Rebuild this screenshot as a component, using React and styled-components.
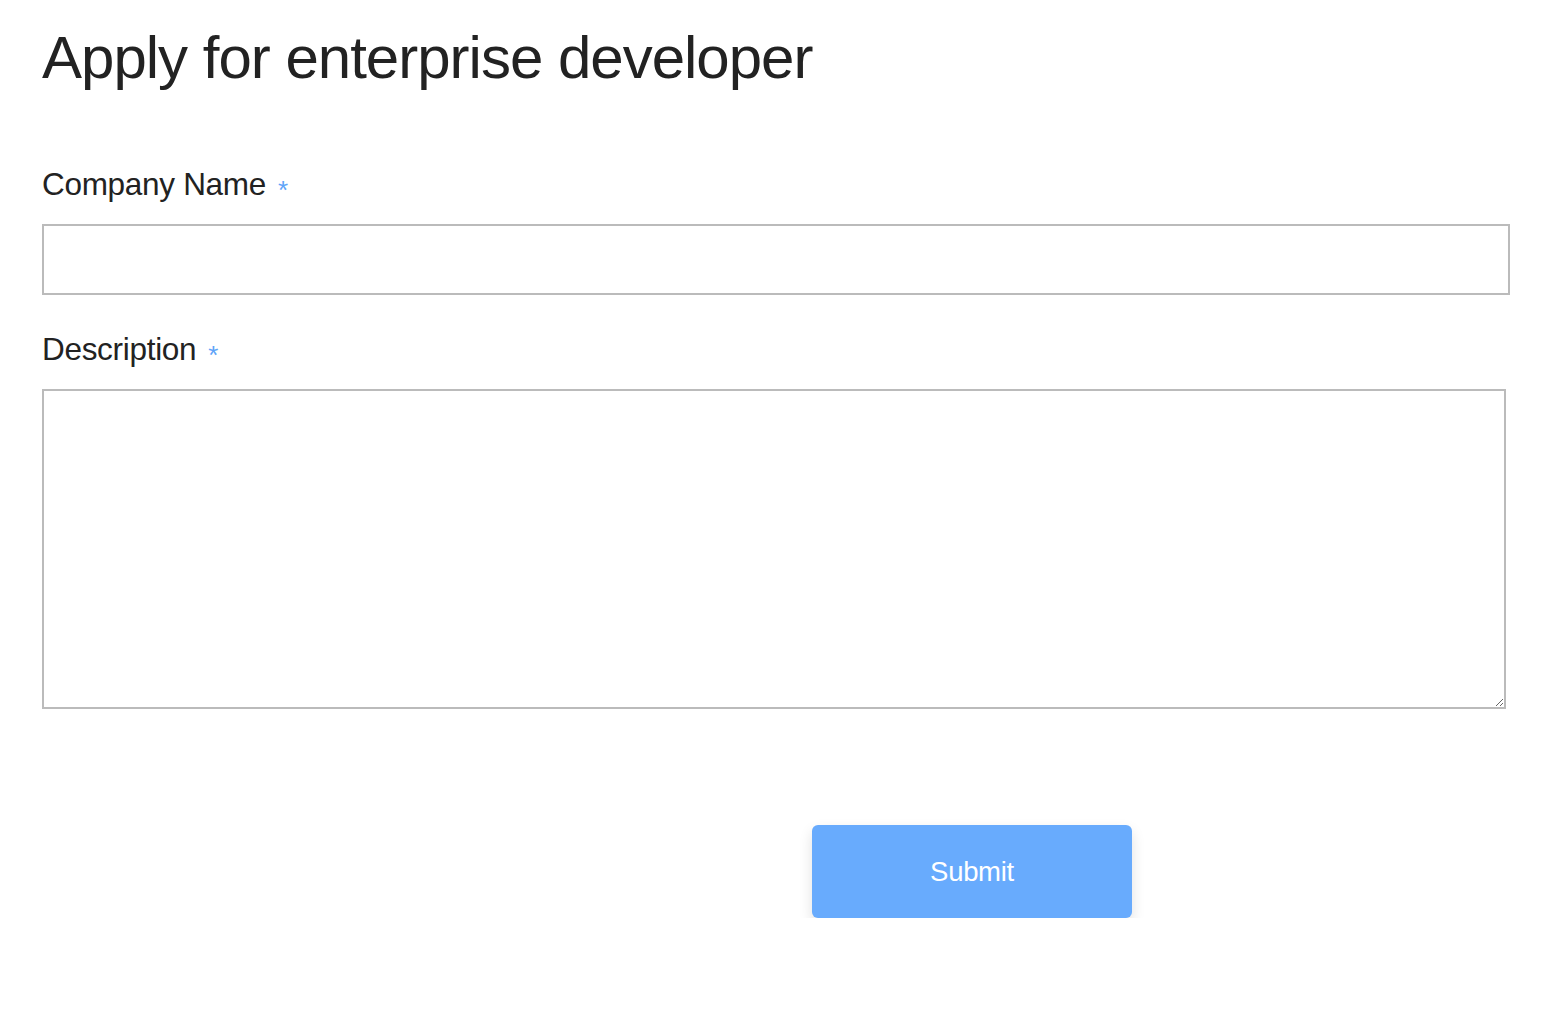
import React from "react";
import styled, { createGlobalStyle } from "styled-components";

const Global = createGlobalStyle`
  html, body {
    margin: 0;
    padding: 0;
    background: #ffffff;
  }
  body {
    font-family: "Liberation Sans", Arial, sans-serif;
    color: #222222;
  }
`;

const Page = styled.div`
  padding: 22px 46px 0 42px;
`;

const Title = styled.h1`
  margin: 0;
  font-size: 60px;
  line-height: 72px;
  font-weight: 400;
  color: #222222;
  letter-spacing: -1px;
`;

const Form = styled.form`
  display: flex;
  flex-direction: column;
  margin-top: 72px;
`;

const Field = styled.div`
  display: flex;
  flex-direction: column;
  margin-bottom: ${({ gap }) => gap || 36}px;
`;

const Label = styled.label`
  display: flex;
  align-items: center;
  gap: 12px;
  font-size: 31.5px;
  line-height: 36px;
  color: #222222;
  margin-bottom: 22px;
  letter-spacing: -0.3px;
`;

const Star = styled.span`
  color: #5fa4f8;
  font-size: 26px;
  line-height: 18px;
  margin-top: 12px;
`;

const Input = styled.input`
  box-sizing: border-box;
  width: 100%;
  height: 71px;
  border: 2px solid #bbbbbb;
  border-radius: 0;
  font-size: 26px;
  padding: 0 12px;
  font-family: inherit;
  outline: none;
`;

const TextArea = styled.textarea`
  box-sizing: border-box;
  width: calc(100% - 4px);
  height: 320px;
  border: 2px solid #bbbbbb;
  border-radius: 0;
  font-size: 26px;
  padding: 12px;
  font-family: inherit;
  outline: none;
  resize: vertical;
`;

const Actions = styled.div`
  display: flex;
  padding-left: 770px;
  margin-top: 80px;
`;

const Button = styled.button`
  width: 320px;
  height: 93px;
  border: none;
  border-radius: 6px;
  background: #68abfd;
  color: #ffffff;
  font-family: "Liberation Sans", Arial, sans-serif;
  font-size: 27.5px;
  letter-spacing: -0.3px;
  cursor: pointer;
  box-shadow: 0 6px 14px rgba(0, 0, 0, 0.12);
`;

export default function App() {
  return (
    <>
      <Global />
      <Page>
        <Title>Apply for enterprise developer</Title>
        <Form onSubmit={e => e.preventDefault()}>
          <Field>
            <Label>
              Company Name <Star>*</Star>
            </Label>
            <Input type="text" />
          </Field>
          <Field gap={0}>
            <Label>
              Description <Star>*</Star>
            </Label>
            <TextArea />
          </Field>
          <Actions>
            <Button type="submit">Submit</Button>
          </Actions>
        </Form>
      </Page>
    </>
  );
}
